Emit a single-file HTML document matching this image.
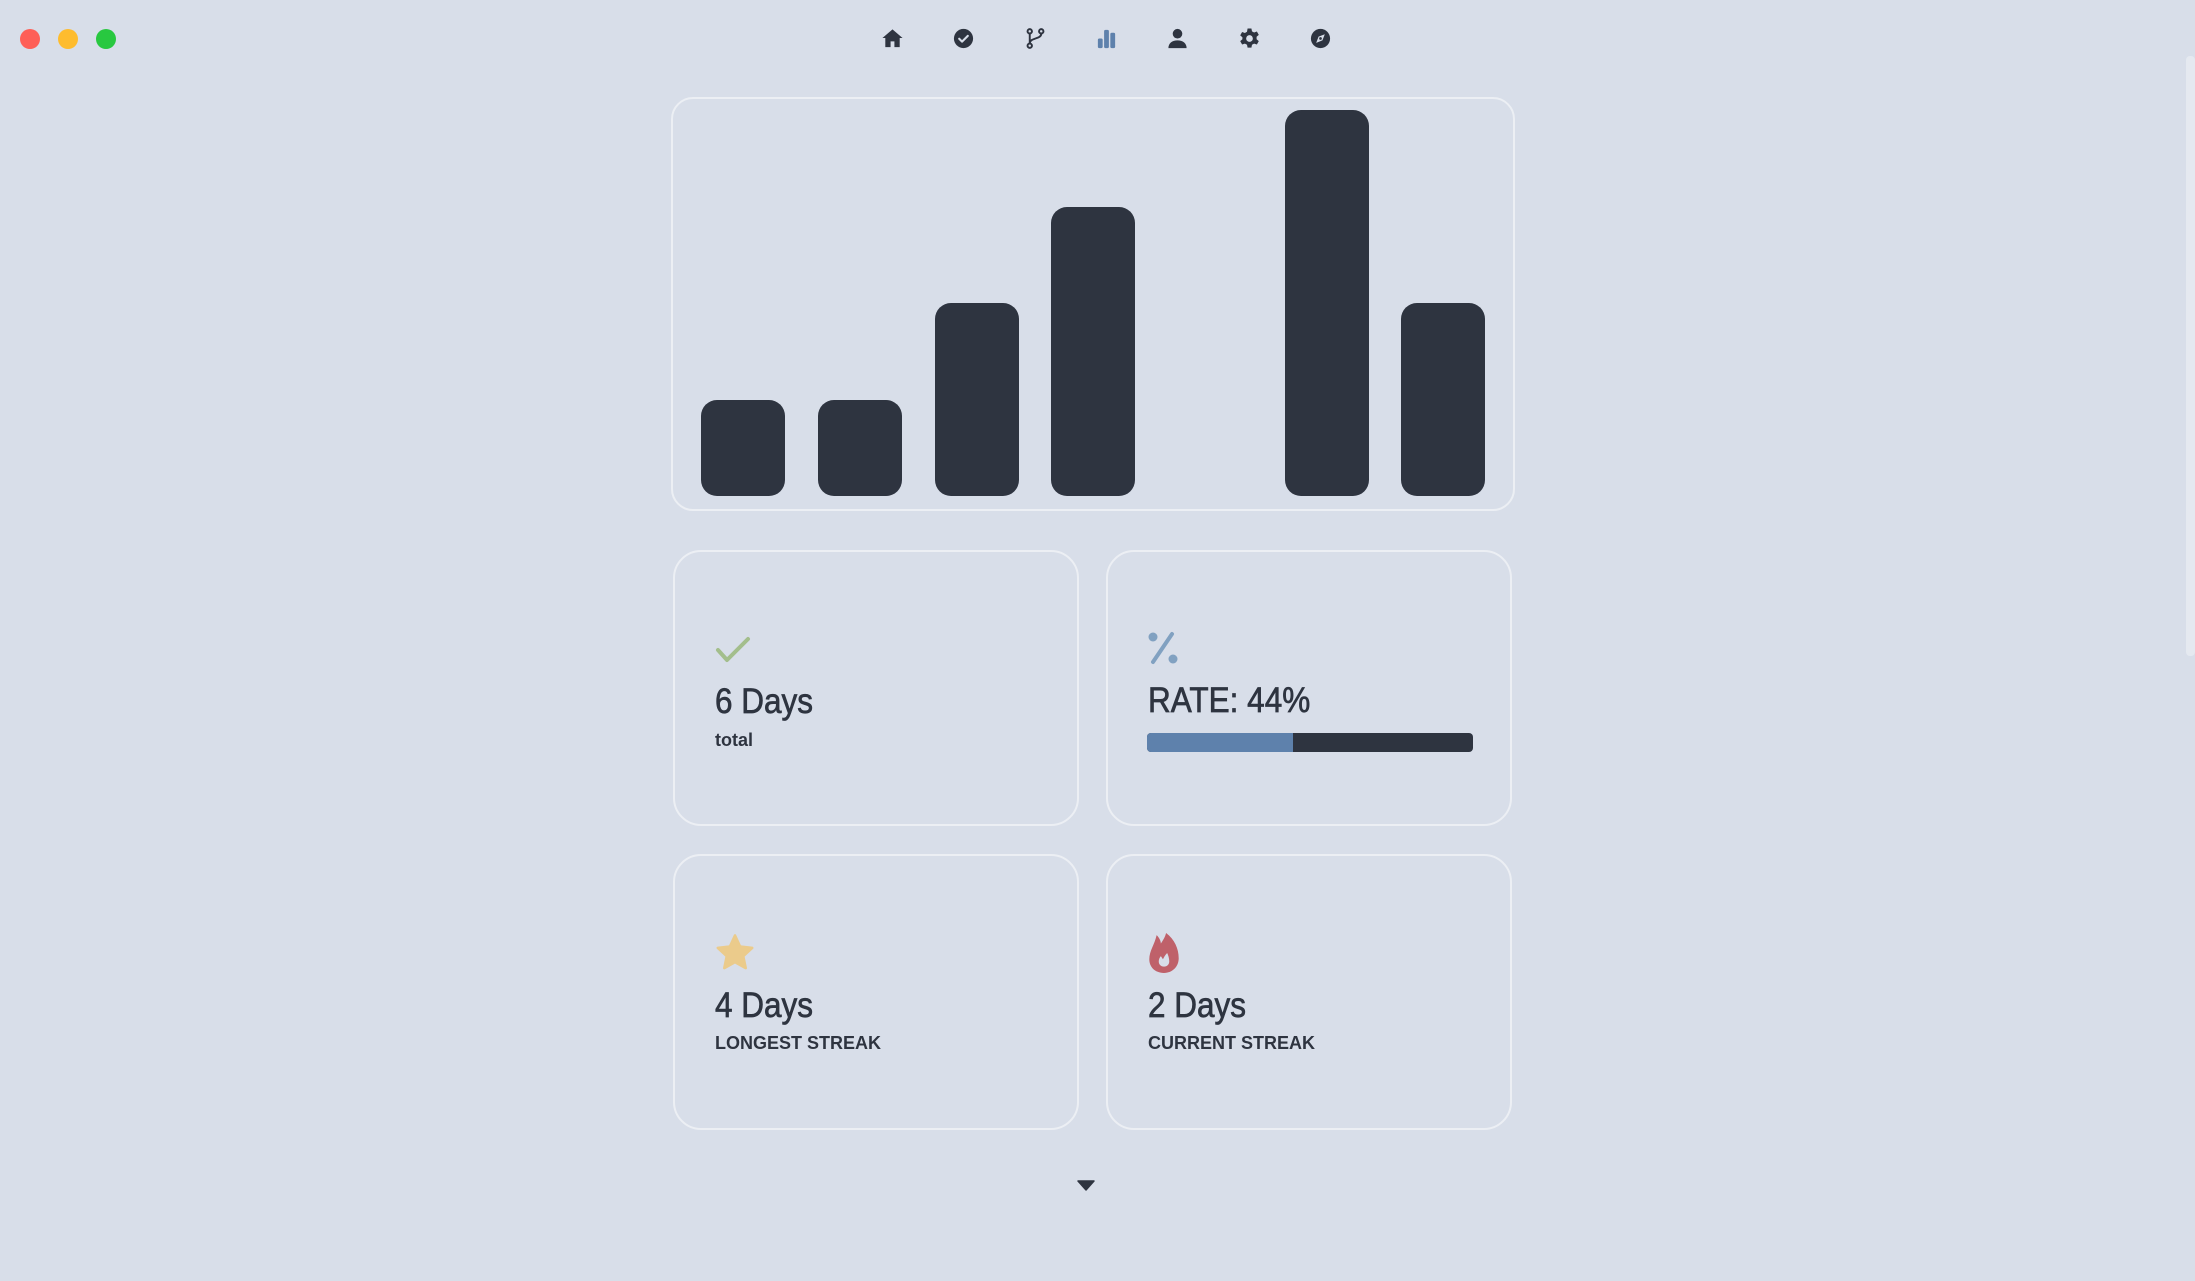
<!DOCTYPE html>
<html><head><meta charset="utf-8"><style>
*{margin:0;padding:0;box-sizing:border-box}
html,body{width:2195px;height:1281px;overflow:hidden;background:#d8dee9;font-family:"Liberation Sans",sans-serif;color:#2e3440}
.abs{position:absolute}
.dot{position:absolute;top:29px;width:20px;height:20px;border-radius:50%}
.chart{position:absolute;left:671px;top:97px;width:844px;height:414px;border:2px solid #eceff4;border-radius:22px}
.bar{position:absolute;width:84px;background:#2e3440;border-radius:16px;bottom:13px}
.card{position:absolute;width:406px;height:276px;border:2px solid #eceff4;border-radius:28px}
.big{position:absolute;left:40px;font-size:35px;line-height:1;transform:scaleX(0.9);transform-origin:left;white-space:nowrap;-webkit-text-stroke:0.7px #2e3440}
.lbl{position:absolute;left:40px;font-size:18px;font-weight:bold;line-height:1;white-space:nowrap}
.nav svg{position:absolute;top:27px;width:23px;height:23px}
</style></head><body>
<div class="dot" style="left:20px;background:#fe5f57"></div>
<div class="dot" style="left:58px;background:#febc2e"></div>
<div class="dot" style="left:96px;background:#28c840"></div>
<div class="abs" style="left:2186px;top:56px;width:9px;height:600px;background:#e5e9f0;border-radius:4px"></div>

<div class="nav">
<svg style="left:881px" viewBox="0 0 24 24"><path fill="#2e3440" d="M12 2.5L1.5 11.5h3V21h5.5v-6h4v6H19.5v-9.5h3z"/></svg>
<svg style="left:952px" viewBox="0 0 24 24"><circle cx="12" cy="12" r="10" fill="#2e3440"/><path d="M7.5 12.3l3 3 6-6" stroke="#d8dee9" stroke-width="2.2" fill="none" stroke-linecap="round" stroke-linejoin="round"/></svg>
<svg style="left:1024px" viewBox="0 0 24 24" fill="none" stroke="#2e3440" stroke-width="2"><circle cx="6" cy="4.5" r="2.3"/><circle cx="6" cy="19.5" r="2.3"/><circle cx="18" cy="4.5" r="2.3"/><path d="M6 7v10M18 7c0 6-12 4-12 10"/></svg>
<svg style="left:1095px" viewBox="0 0 24 24" fill="#5e81ac"><rect x="3" y="12" width="5" height="10" rx="1.5"/><rect x="9.5" y="3" width="5" height="19" rx="1.5"/><rect x="16" y="6" width="5" height="16" rx="1.5"/></svg>
<svg style="left:1166px" viewBox="0 0 24 24" fill="#2e3440"><circle cx="12" cy="7" r="5"/><path d="M2.5 22c0-5 4-8 9.5-8s9.5 3 9.5 8z"/></svg>
<svg style="left:1238px" viewBox="0 0 24 24"><path fill="#2e3440" fill-rule="evenodd" d="M10 1.5h4l.6 3 2.2 1.2 2.9-1 2 3.5-2.3 2v2.6l2.3 2-2 3.5-2.9-1-2.2 1.2-.6 3h-4l-.6-3-2.2-1.2-2.9 1-2-3.5 2.3-2V10.7l-2.3-2 2-3.5 2.9 1 2.2-1.2zM12 8.5a3.5 3.5 0 1 0 0 7a3.5 3.5 0 1 0 0-7z"/></svg>
<svg style="left:1309px" viewBox="0 0 24 24"><circle cx="12" cy="12" r="10" fill="#2e3440"/><path d="M16.5 7.5l-2.5 6.5-6.5 2.5 2.5-6.5z" fill="#d8dee9"/><circle cx="12" cy="12" r="1.4" fill="#2e3440"/></svg>
</div>

<div class="chart">
<div class="bar" style="left:28px;height:96px"></div>
<div class="bar" style="left:145px;height:96px"></div>
<div class="bar" style="left:262px;height:193px"></div>
<div class="bar" style="left:378px;height:289px"></div>
<div class="bar" style="left:612px;height:386px"></div>
<div class="bar" style="left:728px;height:193px"></div>
</div>

<div class="card" style="left:673px;top:550px">
<svg class="abs" style="left:40px;top:84px;width:36px;height:28px" viewBox="0 0 36 28"><path d="M3 14l9 10L33 3" stroke="#a3be8c" stroke-width="4" fill="none" stroke-linecap="round" stroke-linejoin="round"/></svg>
<div class="big" style="top:132px">6 Days</div>
<div class="lbl" style="top:179px">total</div>
</div>
<div class="card" style="left:1106px;top:550px">
<svg class="abs" style="left:39px;top:79px;width:32px;height:34px" viewBox="0 0 32 34" fill="#81a1c1"><circle cx="6" cy="6" r="4.5"/><circle cx="26" cy="28" r="4.5"/><path d="M25 3L6 31" stroke="#81a1c1" stroke-width="4" stroke-linecap="round"/></svg>
<div class="big" style="top:131px">RATE: 44%</div>
<div class="abs" style="left:39px;top:181px;width:326px;height:19px;background:#2e3440;border-radius:4px;overflow:hidden"><div style="width:146px;height:100%;background:#5e81ac"></div></div>
</div>
<div class="card" style="left:673px;top:854px">
<svg class="abs" style="left:39px;top:76px;width:42px;height:42px" viewBox="0 0 24 24"><path fill="#ebcb8b" stroke="#ebcb8b" stroke-width="1.5" stroke-linejoin="round" d="M12 2l2.9 6.3 6.9.8-5.1 4.7 1.4 6.8L12 17.2l-6.1 3.4 1.4-6.8-5.1-4.7 6.9-.8z"/></svg>
<div class="big" style="top:132px">4 Days</div>
<div class="lbl" style="top:178px">LONGEST STREAK</div>
</div>
<div class="card" style="left:1106px;top:854px">
<svg class="abs" style="left:39px;top:76px;width:34px;height:42px" viewBox="0 0 32 40"><path fill="#bf616a" d="M16 39C7 39 2 33 2 26 2 18 7 12 9 3c3 3 4 6 4 8 2-3 4-6 5-10 8 6 12 15 12 24 0 8-6 14-14 14z"/><path fill="#d8dee9" d="M16 33c-3 0-5-2-5-5 0-2 1-4 2-5l2 3c1-2 2-4 4-6 1 2 2 5 2 8 0 3-2 5-5 5z"/></svg>
<div class="big" style="top:132px">2 Days</div>
<div class="lbl" style="top:178px">CURRENT STREAK</div>
</div>

<svg class="abs" style="left:1077px;top:1180px;width:18px;height:11px" viewBox="0 0 18 11"><path d="M1 1h16L9 10z" fill="#2e3440" stroke="#2e3440" stroke-linejoin="round" stroke-width="1.5"/></svg>
</body></html>
